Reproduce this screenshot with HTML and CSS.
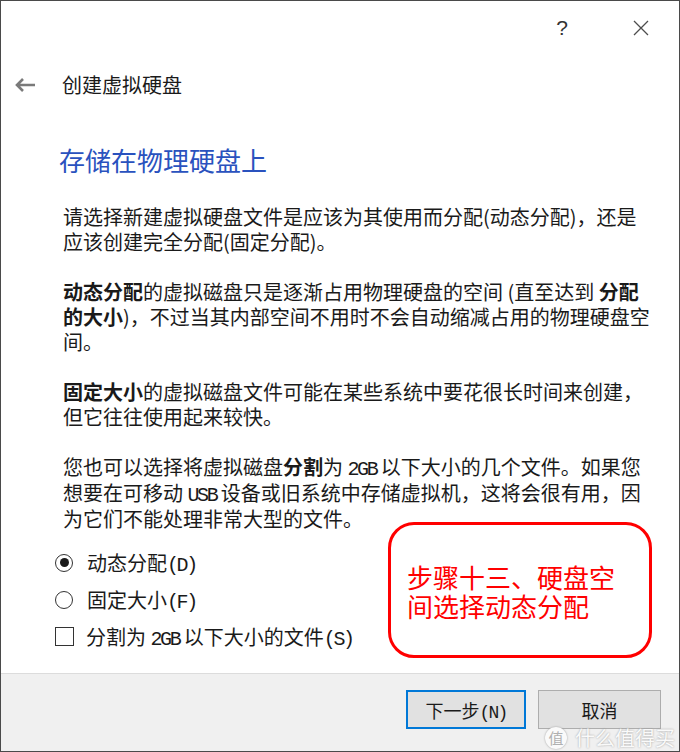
FILE: index.html
```html
<!DOCTYPE html>
<html lang="zh-CN">
<head>
    <meta charset="UTF-8">
    <meta name="viewport" content="width=device-width, initial-scale=1.0">
    <title>创建虚拟硬盘</title>
    <link rel="stylesheet" href="styles.css">
</head>
<body>
    <div class="window">
        <div class="titlebar">
            <span class="help">?</span>
            <svg class="close" width="16" height="16" viewBox="0 0 16 16">
                <path d="M1 1 L15 15 M15 1 L1 15" stroke="#4d4d4d" stroke-width="1.3" fill="none"/>
            </svg>
        </div>

        <div class="header">
            <svg class="back" width="22" height="16" viewBox="0 0 22 16">
                <path d="M21 8 H3 M9 2 L3 8 L9 14" stroke="#7a7a7a" stroke-width="2.6" fill="none"/>
            </svg>
            <span class="wizard-title">创建虚拟硬盘</span>
        </div>

        <div class="content">
            <h2>存储在物理硬盘上</h2>

            <p>请选择新建虚拟硬盘文件是应该为其使用而分配(动态分配)，还是<br>应该创建完全分配(固定分配)。</p>

            <p><b>动态分配</b>的虚拟磁盘只是逐渐占用物理硬盘的空间 (直至达到 <b>分配<br>的大小</b>)，不过当其内部空间不用时不会自动缩减占用的物理硬盘空<br>间。</p>

            <p><b>固定大小</b>的虚拟磁盘文件可能在某些系统中要花很长时间来创建，<br>但它往往使用起来较快。</p>

            <p>您也可以选择将虚拟磁盘<b>分割</b>为 <span class="en">2GB</span> 以下大小的几个文件。如果您<br>想要在可移动 <span class="en">USB</span> 设备或旧系统中存储虚拟机，这将会很有用，因<br>为它们不能处理非常大型的文件。</p>

            <div class="options">
                <div class="option">
                    <span class="radio checked"></span>
                    <span>动态分配<span class="en">(D)</span></span>
                </div>
                <div class="option">
                    <span class="radio"></span>
                    <span>固定大小<span class="en">(F)</span></span>
                </div>
                <div class="option">
                    <span class="checkbox"></span>
                    <span>分割为 <span class="en">2GB</span> 以下大小的文件<span class="en">(S)</span></span>
                </div>
            </div>

            <div class="note">步骤十三、硬盘空<br>间选择动态分配</div>
        </div>

        <div class="footer">
            <button class="btn default">下一步<span class="en">(N)</span></button>
            <button class="btn">取消</button>
        </div>

        <div class="watermark"><span class="wm-logo">值</span>什么值得买</div>
    </div>
</body>
</html>
```

FILE: styles.css
```css
body {
    margin: 0;
    font-family: "Noto Sans CJK SC", "Noto Sans", sans-serif;
    color: #1a1a1a;
    background-color: #fff;
}
.window {
    position: relative;
    width: 680px;
    height: 752px;
    box-sizing: border-box;
    border: 1px solid #4a4a4a;
    display: flex;
    flex-direction: column;
    overflow: hidden;
}
.titlebar {
    height: 53px;
    display: flex;
    align-items: center;
    justify-content: flex-end;
    padding-right: 30px;
    gap: 65px;
}
.help {
    font-family: "Liberation Sans", sans-serif;
    font-size: 21px;
    color: #333;
    line-height: 1;
}
.header {
    height: 62px;
    display: flex;
    align-items: center;
    padding-left: 13px;
}
.back {
    margin-right: 26px;
}
.wizard-title {
    font-size: 20px;
    line-height: 28px;
}
.content {
    position: relative;
    flex: 1;
    padding: 0 8px 0 62px;
}
h2 {
    margin: 27px 0 0 -4px;
    font-size: 26px;
    line-height: 34px;
    font-weight: normal;
    color: #2a52be;
}
p {
    margin: 27px 0 25px 0;
    font-size: 20px;
    line-height: 25px;
}
p + p {
    margin-top: 0;
}
p b {
    font-weight: bold;
}
.en {
    font-family: "Liberation Mono", monospace;
    font-size: 20px;
    letter-spacing: -2.4px;
    line-height: 1;
}
.options {
    margin-top: -12px;
}
.option {
    height: 37px;
    display: flex;
    align-items: center;
    font-size: 20px;
    margin-left: -8px;
}
.radio {
    width: 18px;
    height: 18px;
    box-sizing: border-box;
    border: 1px solid #333;
    border-radius: 50%;
    margin-right: 14px;
    display: flex;
    align-items: center;
    justify-content: center;
}
.radio.checked::after {
    content: "";
    width: 9px;
    height: 9px;
    border-radius: 50%;
    background-color: #1a1a1a;
}
.checkbox {
    width: 19px;
    height: 19px;
    box-sizing: border-box;
    border: 1px solid #333;
    margin-right: 12px;
}
.note {
    position: absolute;
    left: 387px;
    top: 406px;
    width: 264px;
    height: 136px;
    box-sizing: border-box;
    border: 3px solid #ff0000;
    border-radius: 26px;
    padding: 37px 0 0 16px;
    font-size: 26px;
    line-height: 29px;
    color: #ff0000;
}
.footer {
    height: 78px;
    box-sizing: border-box;
    background-color: #f0f0f0;
    border-top: 1px solid #dcdcdc;
    display: flex;
    justify-content: flex-end;
    align-items: flex-start;
    gap: 12px;
    padding: 16px 18px 0 0;
}
.btn {
    width: 123px;
    height: 39px;
    box-sizing: border-box;
    background-color: #e1e1e1;
    border: 1px solid #adadad;
    font-family: "Noto Sans CJK SC", sans-serif;
    font-size: 18px;
    color: #1a1a1a;
    padding: 0;
}
.btn.default {
    width: 120px;
    border: 2px solid #0078d7;
}
.btn .en {
    font-size: 18px;
    letter-spacing: -1.8px;
}
.watermark {
    position: absolute;
    right: 4px;
    bottom: 0;
    display: flex;
    align-items: center;
    gap: 8px;
    font-size: 20px;
    line-height: 26px;
    color: #fafafa;
    text-shadow: 0 0 2px #9a9a9a;
}
.wm-logo {
    width: 22px;
    height: 22px;
    border-radius: 50%;
    background-color: #fafafa;
    box-shadow: 0 0 2px #9a9a9a;
    color: #b0b0b0;
    text-shadow: none;
    font-size: 15px;
    line-height: 22px;
    text-align: center;
}
```
